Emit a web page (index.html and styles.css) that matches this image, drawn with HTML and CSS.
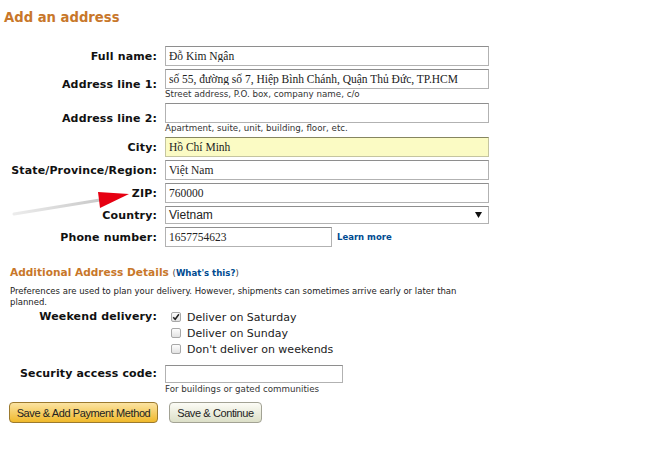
FILE: index.html
```html
<!DOCTYPE html>
<html lang="vi">
<head>
<meta charset="utf-8">
<title>Add an address</title>
<link rel="stylesheet" href="styles.css">
</head>
<body>
<div class="page">
  <h1 class="title">Add an address</h1>

  <div class="form-grid">
    <div class="lbl">Full name:</div>
    <div class="field"><input class="txt" type="text" value="Đỗ Kim Ngân"></div>

    <div class="lbl">Address line 1:</div>
    <div class="field">
      <input class="txt" type="text" value="số 55, đường số 7, Hiệp Bình Chánh, Quận Thủ Đức, TP.HCM">
      <div class="hint">Street address, P.O. box, company name, c/o</div>
    </div>

    <div class="lbl">Address line 2:</div>
    <div class="field">
      <input class="txt" type="text" value="">
      <div class="hint">Apartment, suite, unit, building, floor, etc.</div>
    </div>

    <div class="lbl">City:</div>
    <div class="field"><input class="txt txt-filled" type="text" value="Hồ Chí Minh"></div>

    <div class="lbl">State/Province/Region:</div>
    <div class="field"><input class="txt" type="text" value="Việt Nam"></div>

    <div class="lbl">ZIP:</div>
    <div class="field"><input class="txt" type="text" value="760000"></div>

    <div class="lbl">Country:</div>
    <div class="field">
      <div class="select"><span>Vietnam</span>
        <svg class="caret" width="7" height="6" viewBox="0 0 7 6"><polygon points="0,0 7,0 3.5,6" fill="#111"/></svg>
      </div>
    </div>

    <div class="lbl">Phone number:</div>
    <div class="field phone-row">
      <input class="txt txt-phone" type="text" value="1657754623">
      <a class="link" href="#">Learn more</a>
    </div>
  </div>

  <h2 class="section-head">Additional Address Details <span class="whats">(<a href="#">What's this?</a>)</span></h2>
  <p class="prefs">Preferences are used to plan your delivery. However, shipments can sometimes arrive early or later than planned.</p>

  <div class="opt-grid">
    <div class="lbl lbl-top">Weekend delivery:</div>
    <div class="checks">
      <div class="check"><span class="box box-checked"><svg width="8" height="8" viewBox="0 0 8 8"><path d="M1.2 4.2 L3.2 6.3 L6.9 1.2" fill="none" stroke="#222" stroke-width="1.5"/></svg></span>Deliver on Saturday</div>
      <div class="check"><span class="box"></span>Deliver on Sunday</div>
      <div class="check"><span class="box"></span>Don't deliver on weekends</div>
    </div>
  </div>

  <div class="sec-grid">
    <div class="lbl lbl-sec">Security access code:</div>
    <div class="field">
      <input class="txt txt-sec" type="text" value="">
      <div class="hint hint-sec">For buildings or gated communities</div>
    </div>
  </div>

  <div class="actions">
    <button class="btn btn-primary" type="button">Save &amp; Add Payment Method</button>
    <button class="btn btn-secondary" type="button">Save &amp; Continue</button>
  </div>

  <svg class="annot" width="650" height="463" viewBox="0 0 650 463">
    <defs>
      <linearGradient id="ln" x1="0" y1="0" x2="1" y2="0">
        <stop offset="0" stop-color="#ececec"/>
        <stop offset="1" stop-color="#c9c9c9"/>
      </linearGradient>
    </defs>
    <line x1="14" y1="214" x2="100" y2="200" stroke="url(#ln)" stroke-width="3" stroke-linecap="round"/>
    <polygon points="98,192 129,194 100,208" fill="#e60012"/>
  </svg>
</div>
</body>
</html>
```

FILE: styles.css
```css
body {
  margin: 0;
  background: #fff;
  font-family: "DejaVu Sans", Verdana, sans-serif;
  color: #111;
}

.page {
  position: relative;
  width: 650px;
  height: 463px;
  overflow: hidden;
}

.title {
  margin: 0;
  padding: 10px 0 0 4px;
  font-size: 13.2px;
  line-height: 16px;
  font-weight: bold;
  color: #c8772a;
}

.form-grid {
  display: grid;
  grid-template-columns: 157px 324px;
  column-gap: 8px;
  row-gap: 3px;
  margin-top: 20px;
}

.lbl {
  justify-self: end;
  align-self: center;
  font-size: 11px;
  font-weight: bold;
  letter-spacing: 0.15px;
  white-space: nowrap;
  color: #111;
}

.field {
  display: flex;
  flex-direction: column;
}

.txt {
  display: block;
  box-sizing: border-box;
  width: 324px;
  height: 20px;
  margin: 0;
  padding: 0 3px;
  border: 1px solid #b2b2b2;
  border-top-color: #8e8e8e;
  border-radius: 0;
  background: #fff;
  font: 11.5px "Liberation Serif", "Times New Roman", serif;
  color: #222;
  outline: none;
}

.txt-filled {
  background: #fbfbc4;
  border-color: #c5c5a0;
  border-top-color: #858560;
}

.hint {
  font-size: 8.7px;
  line-height: 11px;
  color: #333;
  white-space: nowrap;
}

.select {
  display: flex;
  align-items: center;
  justify-content: space-between;
  box-sizing: border-box;
  width: 324px;
  height: 18px;
  padding: 0 6px 0 3px;
  border: 1px solid #b2b2b2;
  border-top-color: #8e8e8e;
  font: 12px "Liberation Sans", Arial, sans-serif;
  color: #222;
}

.phone-row {
  flex-direction: row;
  align-items: center;
  gap: 5px;
}

.txt-phone {
  width: 167px;
}

.link {
  font-size: 8.5px;
  font-weight: bold;
  color: #004b91;
  text-decoration: none;
}

.section-head {
  margin: 18px 0 0 10px;
  font-size: 10.6px;
  line-height: 14px;
  font-weight: bold;
  color: #c8772a;
}

.whats {
  font-size: 8.6px;
  font-weight: normal;
  color: #444;
}

.whats a {
  font-weight: bold;
  color: #004b91;
  text-decoration: none;
}

.prefs {
  margin: 6px 0 0 10px;
  width: 480px;
  font-size: 8.5px;
  line-height: 11px;
  color: #222;
}

.opt-grid,
.sec-grid {
  display: grid;
  grid-template-columns: 157px auto;
  column-gap: 8px;
}

.opt-grid {
  margin-top: 1px;
}

.lbl-top {
  align-self: start;
  line-height: 16px;
}

.checks {
  display: flex;
  flex-direction: column;
}

.check {
  display: flex;
  align-items: center;
  gap: 6px;
  height: 16px;
  padding-left: 6px;
  font-size: 11px;
  color: #222;
}

.box {
  display: flex;
  align-items: center;
  justify-content: center;
  box-sizing: border-box;
  width: 10px;
  height: 10px;
  border: 1px solid #a8a8a8;
  border-radius: 2px;
  background: linear-gradient(#fdfdfd, #e2e2e2);
}

.sec-grid {
  margin-top: 8px;
}

.lbl-sec {
  align-self: start;
  line-height: 18px;
}

.txt-sec {
  width: 178px;
  height: 18px;
}

.hint-sec {
  margin-top: 1px;
}

.actions {
  display: flex;
  gap: 11px;
  margin: 7px 0 0 9px;
}

.btn {
  display: flex;
  align-items: center;
  justify-content: center;
  box-sizing: border-box;
  height: 21px;
  padding: 0;
  border-radius: 4px;
  font: 11px "Liberation Sans", Arial, sans-serif;
  letter-spacing: -0.4px;
  color: #222;
}

.btn-primary {
  width: 149px;
  background: linear-gradient(#fbe3a2, #f0b92b);
  border: 1px solid #9c7a2e;
}

.btn-secondary {
  width: 93px;
  background: linear-gradient(#fcfcf6, #dcdfc8);
  border: 1px solid #a2a294;
}

.annot {
  position: absolute;
  left: 0;
  top: 0;
  pointer-events: none;
}
```
